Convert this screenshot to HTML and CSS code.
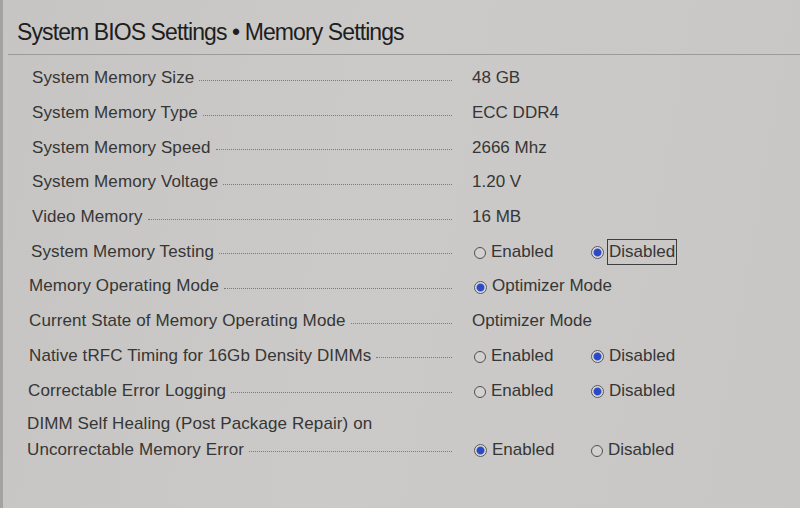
FILE: index.html
```html
<!DOCTYPE html>
<html>
<head>
<meta charset="utf-8">
<link rel="stylesheet" href="styles.css">
</head>
<body>
<div class="screen">
  <div class="header"><h1 class="title">System BIOS Settings • Memory Settings</h1></div>
  <div class="list">
    <div class="row"><div class="label"><span>System Memory Size</span><i class="dots"></i></div><div class="value">48 GB</div></div>
    <div class="row"><div class="label"><span>System Memory Type</span><i class="dots"></i></div><div class="value">ECC DDR4</div></div>
    <div class="row"><div class="label"><span>System Memory Speed</span><i class="dots"></i></div><div class="value">2666 Mhz</div></div>
    <div class="row"><div class="label"><span>System Memory Voltage</span><i class="dots"></i></div><div class="value">1.20 V</div></div>
    <div class="row"><div class="label"><span>Video Memory</span><i class="dots"></i></div><div class="value">16 MB</div></div>
    <div class="row"><div class="label"><span class="s1">System Memory Testing</span><i class="dots"></i></div>
      <div class="value"><span class="opt"><i class="radio"></i><span>Enabled</span></span><span class="opt"><i class="radio on"></i><span class="focus">Disabled</span></span></div></div>
    <div class="row"><div class="label"><span class="s2">Memory Operating Mode</span><i class="dots"></i></div>
      <div class="value"><span class="opt wide"><i class="radio on"></i><span>Optimizer Mode</span></span></div></div>
    <div class="row"><div class="label"><span class="s2">Current State of Memory Operating Mode</span><i class="dots"></i></div><div class="value">Optimizer Mode</div></div>
    <div class="row"><div class="label"><span class="s2">Native tRFC Timing for 16Gb Density DIMMs</span><i class="dots"></i></div>
      <div class="value"><span class="opt"><i class="radio"></i><span>Enabled</span></span><span class="opt"><i class="radio on"></i><span>Disabled</span></span></div></div>
    <div class="row"><div class="label"><span class="s3">Correctable Error Logging</span><i class="dots"></i></div>
      <div class="value"><span class="opt"><i class="radio"></i><span>Enabled</span></span><span class="opt"><i class="radio on"></i><span>Disabled</span></span></div></div>
    <div class="row tall"><div class="label multi"><div class="line1 s4">DIMM Self Healing (Post Package Repair) on</div><div class="line2"><span class="s4">Uncorrectable Memory Error</span><i class="dots"></i></div></div>
      <div class="value bottom"><span class="opt"><i class="radio on"></i><span>Enabled</span></span><span class="opt"><i class="radio"></i><span>Disabled</span></span></div></div>
  </div>
</div>
</body>
</html>
```
FILE: styles.css
```css
html, body {
  margin: 0;
  padding: 0;
}
body {
  width: 800px;
  height: 508px;
  overflow: hidden;
  background: linear-gradient(100deg, #c6c5c3 0%, #cbcac8 45%, #c8c7c5 100%);
  font-family: "Liberation Sans", Arial, sans-serif;
  color: #363636;
}
.screen {
  height: 508px;
  border-left: 3px solid #a3a2a0;
  box-sizing: border-box;
}
.header {
  height: 55px;
  margin-left: 5px;
  border-bottom: 1px solid #9c9b9a;
  padding-left: 9px;
  box-sizing: border-box;
}
.title {
  margin: 0;
  padding-top: 17px;
  font-size: 23px;
  font-weight: normal;
  letter-spacing: -0.9px;
  color: #1e1e1e;
  line-height: 30px;
}
.list {
  padding-top: 6px;
  padding-left: 29px;
}
.row {
  display: grid;
  grid-template-columns: 420px 1fr;
  height: 34.7px;
  align-items: center;
  font-size: 17px;
}
.s1 { margin-left: -1px; }
.s2 { margin-left: -3px; }
.s3 { margin-left: -4px; }
.s4 { margin-left: -5px; }
.label {
  display: flex;
  align-items: center;
  white-space: nowrap;
  letter-spacing: 0.1px;
}
.dots {
  flex: 1;
  height: 0;
  border-bottom: 1px dotted #7a7a7a;
  margin: 4px 0 0 5px;
}
.value {
  padding-left: 20px;
  display: flex;
  align-items: center;
  white-space: nowrap;
}
.opt {
  display: inline-flex;
  align-items: center;
  width: 117px;
}
.opt.wide { width: auto; }
.radio {
  width: 12px;
  height: 12px;
  border: 1px solid #505050;
  border-radius: 50%;
  margin: 2px 5px 0 2px;
  box-sizing: border-box;
  background: #d2d1cf;
  flex: none;
}
.radio.on {
  width: 13px;
  height: 13px;
  border: 1px solid #5a5a5a;
  background: radial-gradient(circle, #2a48c8 0 3.4px, #8d9ad0 4px, #dcdcdc 4.6px);
}
.focus {
  border: 1px solid #3d3d3d;
  padding: 2px 1px 2px 1px;
  margin-left: -2px;
}
.row.tall {
  height: 55px;
  align-items: end;
}
.label.multi {
  display: block;
}
.line1, .line2 {
  line-height: 26px;
  height: 26px;
}
.line2 {
  display: flex;
  align-items: center;
}
.value.bottom {
  height: 26px;
}
```
